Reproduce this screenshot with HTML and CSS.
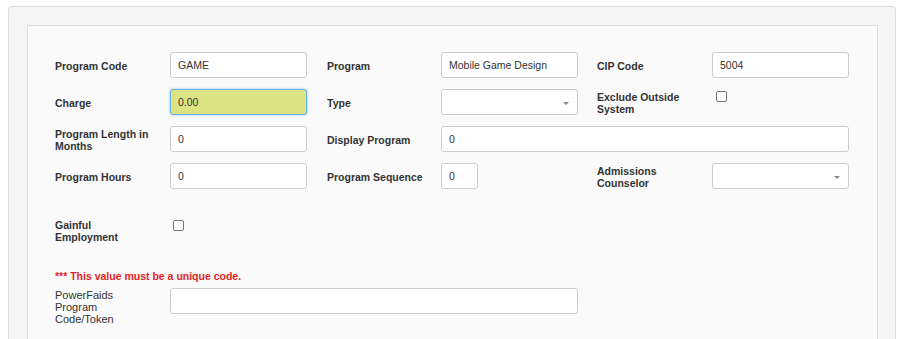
FILE: index.html
```html
<!DOCTYPE html>
<html lang="en">
<head>
    <meta charset="UTF-8">
    <meta name="viewport" content="width=device-width, initial-scale=1.0">
    <title>Program</title>
    <link rel="stylesheet" href="styles.css">
</head>
<body>
    <div class="panel">
        <div class="panel-body">
            <div class="grid">
                <label class="lbl">Program Code</label>
                <input type="text" class="field" value="GAME">
                <label class="lbl mid">Program</label>
                <input type="text" class="field" value="Mobile Game Design">
                <label class="lbl right">CIP Code</label>
                <input type="text" class="field" value="5004">

                <label class="lbl">Charge</label>
                <input type="text" class="field highlight" value="0.00">
                <label class="lbl mid">Type</label>
                <div class="select"><span class="arrow"></span></div>
                <label class="lbl right">Exclude Outside System</label>
                <span class="check top"></span>

                <label class="lbl">Program Length in Months</label>
                <input type="text" class="field" value="0">
                <label class="lbl mid">Display Program</label>
                <input type="text" class="field span3" value="0">

                <label class="lbl">Program Hours</label>
                <input type="text" class="field" value="0">
                <label class="lbl mid">Program Sequence</label>
                <input type="text" class="field narrow" value="0">
                <label class="lbl right">Admissions Counselor</label>
                <div class="select"><span class="arrow"></span></div>
            </div>

            <div class="grid gainful">
                <label class="lbl">Gainful Employment</label>
                <span class="check"></span>
            </div>

            <p class="notice">*** This value must be a unique code.</p>

            <div class="grid powerfaids">
                <label class="lbl plain">PowerFaids Program Code/Token</label>
                <input type="text" class="field span3">
            </div>
        </div>
    </div>
</body>
</html>
```

FILE: styles.css
```css
body { margin: 0; background: #fff; font-family: "Liberation Sans", Arial, sans-serif; color: #333; }
.panel { margin: 6px 6px 0 8px; padding: 18px 17px 0 18px; background: #f5f5f5; border: 1px solid #ddd; border-bottom: none; border-radius: 4px 4px 0 0; }
.panel-body { padding: 26px 27px 40px; background: #fafafa; border: 1px solid #ddd; border-bottom: none; }
.grid { display: grid; grid-template-columns: 115px 137px 134px 137px 134px 137px; row-gap: 11px; align-items: center; }
.lbl { font-size: 10.5px; font-weight: bold; line-height: 12px; padding: 2px 19px 0 0; color: #333; }
.lbl.mid { padding-left: 20px; padding-right: 10px; }
.lbl.right { padding-left: 19px; padding-right: 10px; }
.lbl.plain { font-size: 11px; font-weight: normal; padding-top: 1px; }
.field { height: 26px; box-sizing: border-box; padding: 0 7px; border: 1px solid #ccc; border-radius: 3px; background: #fff; font-family: "Liberation Sans", Arial, sans-serif; font-size: 10.5px; color: #333; outline: none; }
.field.highlight { background: #dde283; border-color: #66afe9; box-shadow: 0 0 3px rgba(102, 175, 233, 0.7); }
.field.span3 { grid-column: span 3; }
.field.narrow { width: 37px; justify-self: start; }
.select { position: relative; height: 26px; box-sizing: border-box; border: 1px solid #ccc; border-radius: 3px; background: #fff; }
.select .arrow { position: absolute; right: 8px; top: 12px; border-style: solid; border-width: 3px 3px 0; border-color: #888 transparent transparent; }
.check { width: 9px; height: 9px; border: 1px solid #767676; border-radius: 2px; background: #fff; margin-left: 3px; }
.check.top { align-self: start; margin-top: 2px; margin-left: 4px; }
.gainful { margin-top: 29px; align-items: start; }
.gainful .lbl { padding-top: 1px; }
.gainful .check { margin-top: 2px; }
.notice { margin: 27px 0 6px; font-size: 10.5px; font-weight: bold; line-height: 12px; color: #e31e24; }
.powerfaids { align-items: start; }
```
